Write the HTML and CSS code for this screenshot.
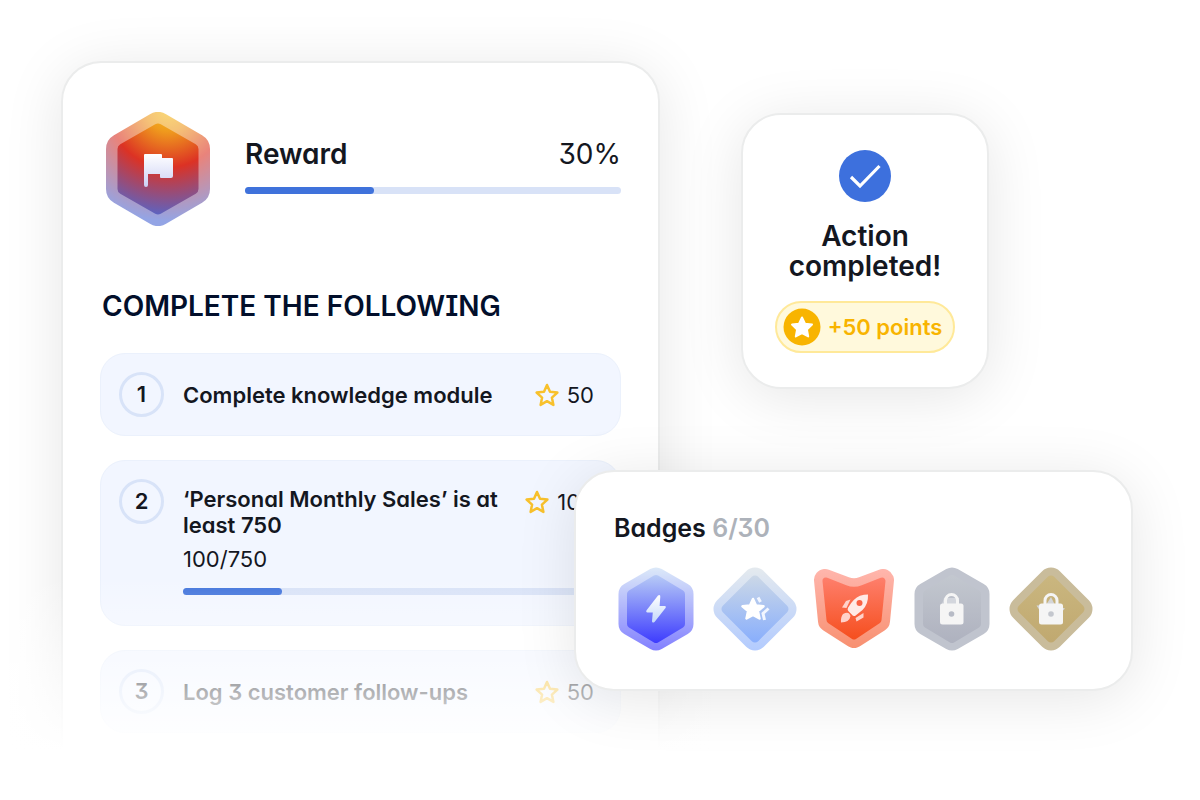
FILE: index.html
```
<!DOCTYPE html>
<html lang="en">
<head>
  <meta charset="UTF-8" />
  <meta name="viewport" content="width=device-width, initial-scale=1.0"/>
  <title>Rewards</title>
  <link rel="stylesheet" href="styles.css">
</head>
<body>
  <main class="scene">
    <section class="card reward-card">
      <header class="reward">
        <svg class="reward-badge" viewBox="0 0 104 116" aria-hidden="true">
          <defs>
            <radialGradient id="sunset" gradientUnits="userSpaceOnUse" cx="62" cy="-2" r="112">
              <stop offset="0" stop-color="#f7c21c"/>
              <stop offset=".2" stop-color="#ef9a1d"/>
              <stop offset=".52" stop-color="#dc3224"/>
              <stop offset="1" stop-color="#4d69d4"/>
            </radialGradient>
            <linearGradient id="flagFill" x1="0" y1="0" x2="0" y2="1">
              <stop offset="0" stop-color="#fff"/>
              <stop offset="1" stop-color="#ccd0f5"/>
            </linearGradient>
          </defs>
          <path d="M16 38 52 17 88 38V78L52 99 16 78Z" fill="url(#sunset)" stroke="url(#sunset)" stroke-width="32" stroke-linejoin="round" opacity=".6"/>
          <path d="M17 38 52 18 87 38V78L52 98 17 78Z" fill="url(#sunset)" stroke="url(#sunset)" stroke-width="11" stroke-linejoin="round"/>
          <path d="M39 43h16q1 0 1 1v3h10q1 0 1 1v17q0 2-2 2H55q-1 0-1-1v-3H42v11q0 2-2 2t-2-2V44q0-1 1-1Z" fill="url(#flagFill)"/>
        </svg>
        <div class="reward-info">
          <div class="reward-title">
            <h1>Reward</h1>
            <span>30%</span>
          </div>
          <div class="bar"><div class="bar-fill" style="width: 34.4%"></div></div>
        </div>
      </header>

      <h2>COMPLETE THE FOLLOWING</h2>

      <ol class="tasks">
        <li class="task">
          <span class="num">1</span>
          <h3>Complete knowledge module</h3>
          <span class="points"><svg class="star" viewBox="0 0 26 26"><path d="M13 3l3 6.800 7.400.8-5.500 5 1.500 7.300L13 19.200 6.600 22.900l1.500-7.300-5.500-5L10 9.800Z"/></svg>50</span>
        </li>
        <li class="task tall">
          <span class="num">2</span>
          <h3>‘Personal Monthly Sales’ is at least 750</h3>
          <span class="points"><svg class="star" viewBox="0 0 26 26"><path d="M13 3l3 6.800 7.400.8-5.500 5 1.500 7.300L13 19.200 6.600 22.900l1.500-7.300-5.500-5L10 9.800Z"/></svg>100</span>
          <div class="progress">
            <p>100/750</p>
            <div class="bar"><div class="bar-fill" style="width: 24.2%"></div></div>
          </div>
        </li>
        <li class="task">
          <span class="num">3</span>
          <h3>Log 3 customer follow-ups</h3>
          <span class="points"><svg class="star" viewBox="0 0 26 26"><path d="M13 3l3 6.800 7.400.8-5.500 5 1.500 7.300L13 19.200 6.600 22.900l1.500-7.300-5.500-5L10 9.800Z"/></svg>50</span>
        </li>
      </ol>
      <div class="fade"></div>
    </section>

    <div class="side">
      <section class="card action-card">
        <svg class="check" viewBox="0 0 52 52" aria-hidden="true">
          <circle cx="26" cy="26" r="26" fill="#3d70dd"/>
          <path d="M12 27 21 36 40.500 16" fill="none" stroke="#fff" stroke-width="3.200"/>
        </svg>
        <h2>Action completed!</h2>
        <div class="pill">
          <svg viewBox="0 0 38 38" aria-hidden="true">
            <circle cx="19" cy="19" r="18.500" fill="#f8b400"/>
            <path d="M19 9.500l3 6.300 7 .8-5.100 4.800 1.300 7L19 25l-6.200 3.400 1.300-7L9 16.600l7-.8Z" fill="#fff" stroke="#fff" stroke-width="2" stroke-linejoin="round"/>
          </svg>
          <span>+50 points</span>
        </div>
      </section>

      <section class="card badges-card">
        <h2>Badges <span>6/30</span></h2>
        <ul class="badges">
          <li>
            <svg viewBox="0 0 84 84" role="img" aria-label="Lightning badge">
              <defs>
                <linearGradient id="blue" gradientUnits="userSpaceOnUse" x1="0" y1="0" x2="0" y2="84">
                  <stop offset="0" stop-color="#c6dcf5"/>
                  <stop offset="1" stop-color="#2f2bff"/>
                </linearGradient>
                <linearGradient id="pale" x1="0" y1="0" x2="0" y2="1">
                  <stop offset="0" stop-color="#fff"/>
                  <stop offset="1" stop-color="#c4d8fa"/>
                </linearGradient>
              </defs>
              <path d="M16 27 42 12 68 27V57L42 72 16 57Z" fill="url(#blue)" stroke="url(#blue)" stroke-width="23" stroke-linejoin="round" opacity=".6"/>
              <path d="M17 27 42 12 67 27V57L42 72 17 57Z" fill="url(#blue)" stroke="url(#blue)" stroke-width="8" stroke-linejoin="round"/>
              <path d="M44 28.500q2.500-1.200 2.300 1.300l-.7 9.200h5q2 .2.900 2L40.500 55q-2.300 1.500-2.500-.8l.8-8.700h-5.300q-2-.4-.9-2.200Z" fill="url(#pale)"/>
            </svg>
          </li>
          <li>
            <svg viewBox="0 0 84 84" role="img" aria-label="Star badge">
              <defs>
                <linearGradient id="sky" gradientUnits="userSpaceOnUse" x1="0" y1="0" x2="0" y2="84">
                  <stop offset="0" stop-color="#d4dde4"/>
                  <stop offset="1" stop-color="#80a9ff"/>
                </linearGradient>
              </defs>
              <path d="M42 13 71 42 42 71 13 42Z" fill="url(#sky)" stroke="url(#sky)" stroke-width="25" stroke-linejoin="round" opacity=".6"/>
              <path d="M42 13 71 42 42 71 13 42Z" fill="url(#sky)" stroke="url(#sky)" stroke-width="9" stroke-linejoin="round"/>
              <path d="M40 32l3 6.500 7.500.8-5.600 4.800 1.600 7.400L40 47.800l-6.500 3.700 1.600-7.400-5.600-4.800 7.500-.8Z" fill="#fff" stroke="#fff" stroke-width="2.500" stroke-linejoin="round"/>
              <path d="M45 30.500l2.500 4.500M55.500 41.500 50 46.500l1.500 6.500" fill="none" stroke="#f2f6ff" stroke-width="3"/>
            </svg>
          </li>
          <li>
            <svg viewBox="0 0 84 84" role="img" aria-label="Rocket badge">
              <defs>
                <linearGradient id="coral" gradientUnits="userSpaceOnUse" x1="0" y1="4" x2="0" y2="82">
                  <stop offset="0" stop-color="#ff8474"/>
                  <stop offset="1" stop-color="#f44712"/>
                </linearGradient>
              </defs>
              <path d="M13 13 33 20.500Q42 24 51 20.500L71 13 67 54 42 70 17 54Z" fill="url(#coral)" stroke="url(#coral)" stroke-width="22" stroke-linejoin="round" opacity=".6"/>
              <path d="M14 14 33 21.500Q42 25 51 21.500L70 14 66 53 42 69 18 53Z" fill="url(#coral)" stroke="url(#coral)" stroke-width="7" stroke-linejoin="round"/>
              <path d="M56 27.500q.5 9.500-5.500 15.500l-7.500 6q-2 .5-3-1.200l-3.500-3.500q-1.500-1.500-.5-3.500 5.500-9.500 12-12 4-1.300 8-1.300Z" fill="#ffeae6"/>
              <circle cx="47.500" cy="36" r="3" fill="#fa6245"/>
              <path d="M38.500 32.500l-4.500 1.500-4 6.500 4.500.5ZM51.500 46v4.500l-7 4-1-3.500ZM31 47q6-3.500 7.500 2-1 6.500-9.500 6.500-.5-5.500 2-8.500Z" fill="#ffd2ca"/>
            </svg>
          </li>
          <li>
            <svg viewBox="0 0 84 84" role="img" aria-label="Locked badge">
              <defs>
                <linearGradient id="grey" gradientUnits="userSpaceOnUse" x1="0" y1="0" x2="0" y2="84">
                  <stop offset="0" stop-color="#c5cad1"/>
                  <stop offset="1" stop-color="#acafbd"/>
                </linearGradient>
              </defs>
              <path d="M16 27 42 12 68 27V57L42 72 16 57Z" fill="#c0c4ce" stroke="#c0c4ce" stroke-width="23" stroke-linejoin="round"/>
              <path d="M17 27 42 12 67 27V57L42 72 17 57Z" fill="url(#grey)" stroke="url(#grey)" stroke-width="8" stroke-linejoin="round"/>
              <path d="M34 31h15v6H32Z" fill="#d3d6dd"/>
              <path d="M35.500 37v-3.500a6 6 0 0 1 12 0V37" fill="none" stroke="#f5f5f5" stroke-width="3"/>
              <rect x="30" y="36.500" width="23.500" height="21" rx="2.500" fill="#f5f5f5"/>
              <circle cx="41.500" cy="47" r="2.800" fill="#b7bbc6"/>
            </svg>
          </li>
          <li>
            <svg viewBox="0 0 84 84" role="img" aria-label="Locked gold badge">
              <defs>
                <linearGradient id="gold" gradientUnits="userSpaceOnUse" x1="0" y1="0" x2="0" y2="84">
                  <stop offset="0" stop-color="#cbb881"/>
                  <stop offset="1" stop-color="#bfa76e"/>
                </linearGradient>
              </defs>
              <path d="M42 13 71 42 42 71 13 42Z" fill="#c9bc9b" stroke="#c9bc9b" stroke-width="25" stroke-linejoin="round"/>
              <path d="M42 13 71 42 42 71 13 42Z" fill="url(#gold)" stroke="url(#gold)" stroke-width="9" stroke-linejoin="round"/>
              <path d="M42 30l4 8 10 3.500-4 4H32l-4.500-7 9.500-.5Z" fill="#d4d5d8"/>
              <path d="M36 37v-3.500a6 6 0 0 1 12 0V37" fill="none" stroke="#f5f5f5" stroke-width="3"/>
              <rect x="30" y="36.500" width="24" height="21" rx="2.500" fill="#f5f5f5"/>
              <circle cx="42" cy="47" r="2.800" fill="#c4c7ce"/>
            </svg>
          </li>
        </ul>
      </section>
    </div>
  </main>
</body>
</html>
```
FILE: styles.css
```
* {
  margin: 0;
  padding: 0;
  box-sizing: border-box;
}

body {
  background: #fff;
  color: #14171f;
  font-family: Inter, sans-serif;
  font-feature-settings: "cv08", "cv09", "cv10", "cv11";
}

h1, h2, h3 {
  font-weight: 600;
}

ul, ol {
  list-style: none;
}

.scene {
  display: grid;
  grid-template-columns: 599fr 473fr;
  min-height: 100vh;
  padding: 61px 67px 0 61px;
}

.card {
  background: #fff;
  border: 2px solid #ebecec;
  border-radius: 40px;
  box-shadow: 0 8px 60px rgba(0, 0, 0, 0.1);
}

.reward-card {
  position: relative;
  padding: 48px 37px 0;
  border-bottom: 0;
  border-radius: 40px 40px 0 0;
}

.reward {
  display: flex;
  gap: 35px;
  padding-left: 6px;
}

.reward-badge {
  width: 104px;
  height: 116px;
}

.reward-info {
  flex: 1;
  padding-top: 26px;
}

.reward-title {
  display: flex;
  justify-content: space-between;
  font-size: 28px;
  line-height: 34px;
}

.reward-title h1 {
  font-size: 28px;
}

.bar {
  height: 7px;
  margin-top: 16px;
  border-radius: 4px;
  background: #d8e2f7;
}

.bar-fill {
  height: 100%;
  border-radius: 4px;
  background: #3f72db;
}

.reward-card h2 {
  margin: 62px 0 30px 2px;
  font-size: 28px;
  line-height: 34px;
  color: #020f2b;
}

.tasks {
  display: grid;
  gap: 24px;
}

.task {
  display: grid;
  grid-template-columns: 45px 1fr auto;
  column-gap: 19px;
  align-items: center;
  padding: 18px 26px 18px 18px;
  border: 1px solid #ebf1fc;
  border-radius: 25px;
  background: #f2f6ff;
}

.task.tall {
  align-items: start;
  padding-bottom: 30px;
}

.num {
  width: 45px;
  height: 45px;
  border: 3px solid #d8e3f8;
  border-radius: 50%;
  font-size: 22px;
  font-weight: 600;
  line-height: 39px;
  text-align: center;
}

.task h3 {
  font-size: 22px;
  line-height: 26px;
}

.tall h3 {
  padding-top: 7px;
}

.progress {
  grid-column: 2 / -1;
  padding-top: 8px;
}

.progress p {
  font-size: 22px;
  line-height: 26px;
}

.points {
  display: flex;
  align-items: center;
  gap: 7px;
  height: 45px;
  font-size: 22px;
}

.star {
  width: 26px;
  height: 26px;
  fill: none;
  stroke: #f8c12c;
  stroke-width: 2.5;
  stroke-linejoin: round;
}

/* fades out the lower part of the card and its shadow */
.fade {
  position: absolute;
  top: 512px;
  bottom: 0;
  left: -61px;
  right: -67px;
  background: linear-gradient(rgba(255, 255, 255, 0), #fff 175px);
}

.side {
  padding-top: 52px;
}

.action-card {
  display: flex;
  flex-direction: column;
  align-items: center;
  width: 248px;
  margin-left: 81px;
  padding: 35px 30px 34px;
  text-align: center;
}

.check {
  width: 52px;
  height: 52px;
}

.action-card h2 {
  margin: 19px 0 20px;
  font-size: 28px;
  line-height: 30px;
}

.pill {
  display: flex;
  align-items: center;
  gap: 7px;
  padding: 5px 11px 5px 6px;
  border: 2px solid #ffe999;
  border-radius: 26px;
  background: #fff9dc;
  color: #f8b400;
  font-size: 22px;
  font-weight: 600;
  white-space: nowrap;
}

.pill svg {
  width: 38px;
  height: 38px;
}

.badges-card {
  position: relative;
  margin: 81px 0 0 -86px;
  padding: 39px 38px 38px;
}

.badges-card h2 {
  font-size: 25px;
  line-height: 34px;
}

.badges-card h2 span {
  color: #adb2ba;
}

.badges {
  display: flex;
  justify-content: space-between;
  margin-top: 22px;
}

.badges svg {
  display: block;
  width: 84px;
  height: 84px;
}
```
